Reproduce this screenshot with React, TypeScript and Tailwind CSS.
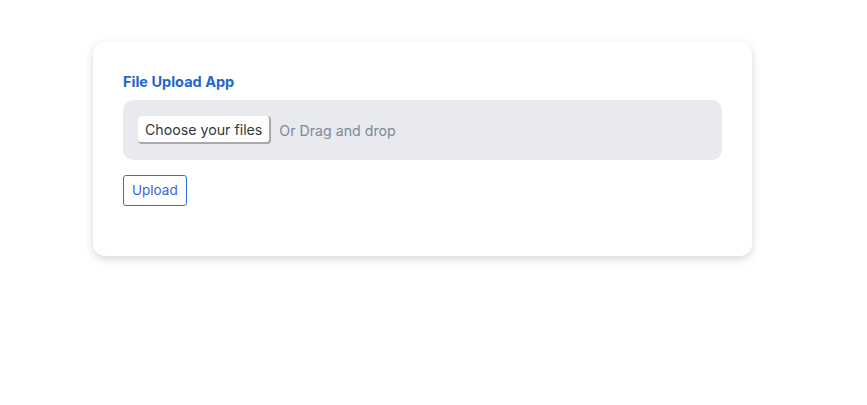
import React from "react";

export default function App() {
  return (
    <div className="min-h-[405px] w-full bg-white pt-[42px] font-['Inter',sans-serif]">
      <div className="ml-[93px] w-[659px] rounded-xl bg-white px-[30px] pb-[50px] pt-[30px] shadow-[0_3px_8px_rgba(0,0,0,0.16)]">
        <h1 className="text-[14.5px] font-bold leading-[20px] text-[#2465c9]">File Upload App</h1>
        <div className="mt-[8px] flex h-[60px] items-center rounded-[10px] bg-[#e9eaef] px-[15px]">
          <button className="h-[28px] rounded-[4px] border-b-2 border-r-2 border-[#a9a9ad] bg-white px-[7px] pt-[1px] text-[14.2px] text-[#333740]">
            Choose your files
          </button>
          <span className="ml-[8px] pt-[1px] text-[14.2px] text-[#7f8897]">Or Drag and drop</span>
        </div>
        <button className="mt-[15px] h-[31px] rounded-[3px] border border-[#2f6fe4] px-[8px] text-[13.5px] text-[#3a5fe0]">
          Upload
        </button>
      </div>
    </div>
  );
}
